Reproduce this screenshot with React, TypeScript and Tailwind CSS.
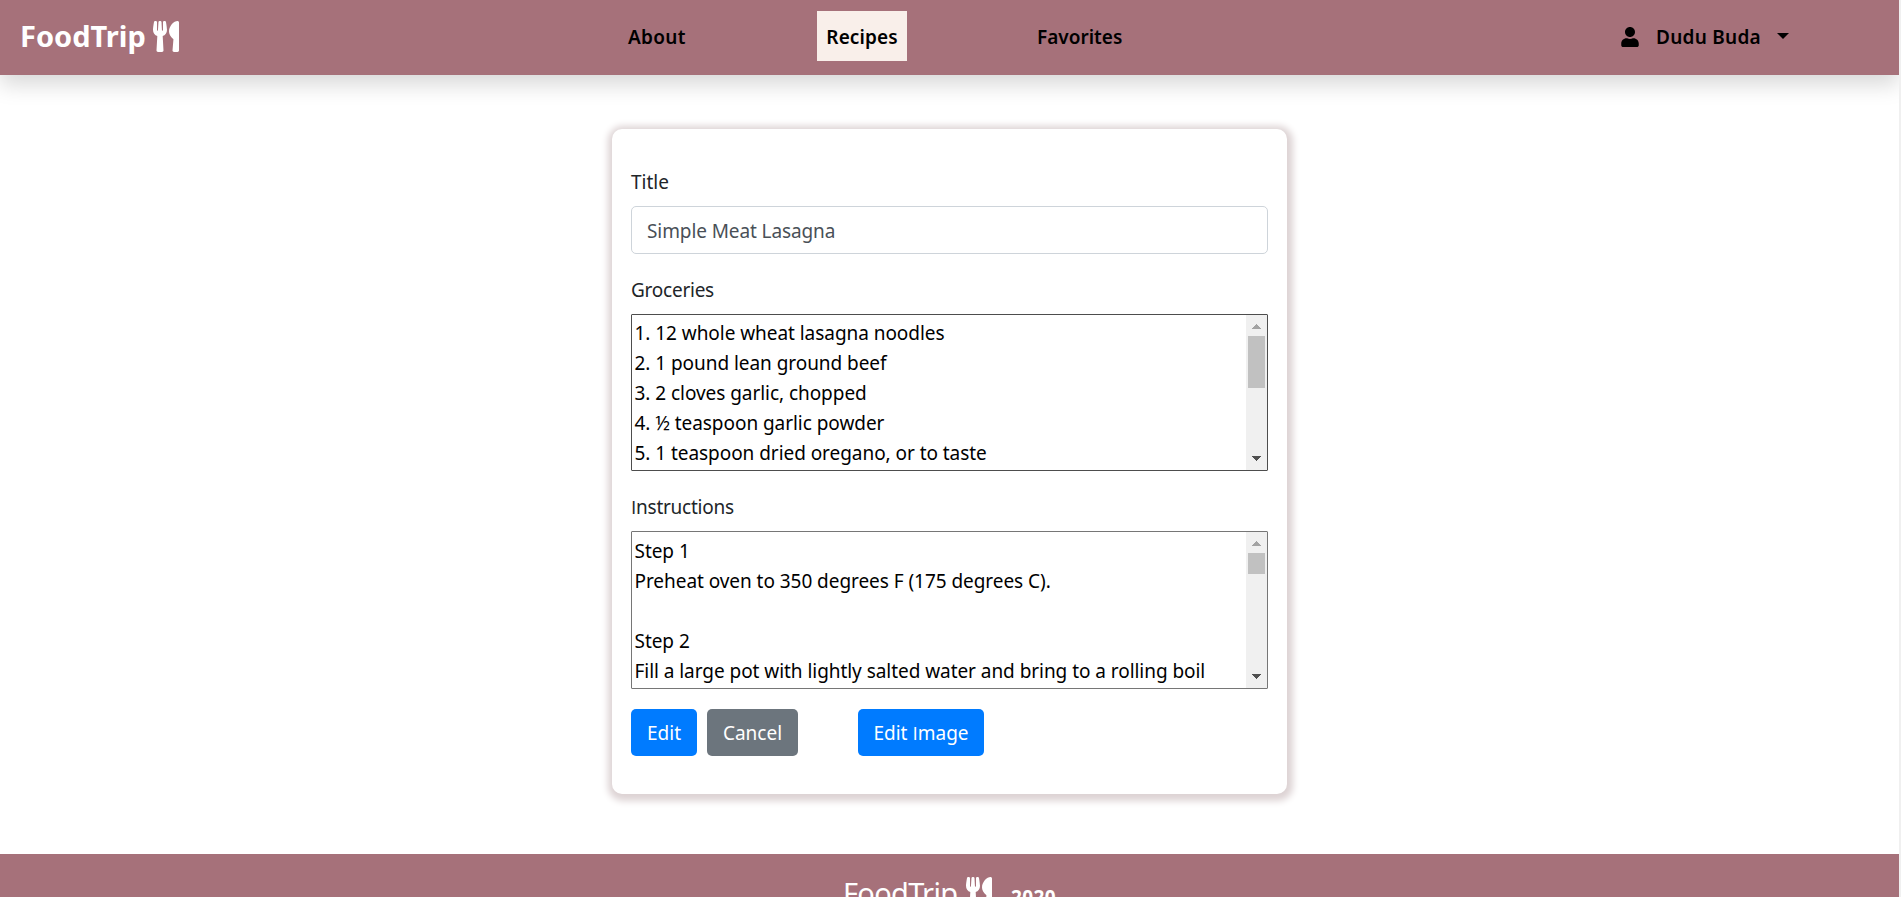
import type { ReactNode } from "react";
import { FaUser, FaUtensils } from "react-icons/fa";

const groceries = [
  "1. 12 whole wheat lasagna noodles",
  "2. 1 pound lean ground beef",
  "3. 2 cloves garlic, chopped",
  "4. ½ teaspoon garlic powder",
  "5. 1 teaspoon dried oregano, or to taste",
];

const instructions = [
  "Step 1",
  "Preheat oven to 350 degrees F (175 degrees C).",
  "",
  "Step 2",
  "Fill a large pot with lightly salted water and bring to a rolling boil",
];

function PlainI() {
  return <span className="font-['Open_Sans',sans-serif]">I</span>;
}

function Scrollbar({ thumb }: { thumb: string }) {
  return (
    <div className="flex w-[21px] shrink-0 flex-col items-center bg-[#f0f0f0]">
      <svg className="h-[21px] w-[21px] shrink-0" viewBox="0 0 21 21" shapeRendering="crispEdges">
        <path d="M6 14h9l-4.5-5z" fill="#a3a3a3" />
      </svg>
      <div className={"w-[17px] bg-[#c1c1c1] " + thumb} />
      <svg className="mt-auto h-[21px] w-[21px] shrink-0" viewBox="0 0 21 21" shapeRendering="crispEdges">
        <path d="M6 7h9l-4.5 5z" fill="#505050" />
      </svg>
    </div>
  );
}

interface TextBoxProps {
  lines: string[];
  frame: string;
  inset: string;
  thumb: string;
}

function TextBox({ lines, frame, inset, thumb }: TextBoxProps) {
  return (
    <div className={"mt-[9px] flex overflow-hidden rounded-[1px] border " + frame}>
      <div className={"min-w-0 flex-1 pl-[2.5px] tracking-[-0.05px] text-black " + inset}>
        {lines.map((line, i) => (
          <div key={i} className="h-[30px] whitespace-nowrap">
            {line}
          </div>
        ))}
      </div>
      <Scrollbar thumb={thumb} />
    </div>
  );
}

function Button({ className, children }: { className: string; children: ReactNode }) {
  return (
    <button className={"flex h-[47px] items-center justify-center whitespace-nowrap rounded-[5px] text-white " + className}>
      {children}
    </button>
  );
}

export default function App() {
  return (
    <div className="flex h-[897px] w-full overflow-hidden bg-white font-['Noto_Sans',sans-serif] text-[19px] leading-[30px] text-[#212529]">
      <div className="flex min-w-0 flex-1 flex-col overflow-hidden">
        <header className="flex h-[75px] shrink-0 items-center bg-[#a6717a] pb-[3px] font-semibold text-black shadow-[0_10px_20px_rgba(0,0,0,0.15)]">
          <div className="flex w-[628px] items-center pl-5 text-white">
            <span className="w-[133px] text-[29px] font-bold">FoodTrip</span>
            <FaUtensils className="h-[31px] w-[26px]" preserveAspectRatio="none" />
          </div>
          <nav className="flex h-full w-[992px] items-center">
            <a className="w-[189px] pt-px tracking-[0.3px]">About</a>
            <a className="flex h-[50px] w-[90px] items-center justify-center bg-[#f9efea] pt-px tracking-[0.1px]">Recipes</a>
            <a className="ml-[130px] pt-px">Favorites</a>
          </nav>
          <div className="flex items-center pt-px">
            <FaUser className="size-5" />
            <span className="ml-4 tracking-[0.25px]">Dudu Buda</span>
            <svg className="mb-0.5 ml-4 h-1.5 w-3" viewBox="0 0 12 6">
              <path d="M0 0h12L6 6z" />
            </svg>
          </div>
        </header>

        <main className="flex h-[779px] shrink-0 justify-center pt-[54px]">
          <form className="flex h-[665px] w-[675px] flex-col rounded-[10px] bg-white px-[19px] pt-[38px] shadow-[1px_2px_7px_5px_#ddd3d4]">
            <label>Title</label>
            <div className="mt-[9px] mb-[21px] flex h-12 items-center rounded-[5px] border border-[#ced4da] px-[15px] pt-0.5 tracking-[-0.1px] text-[#495057]">
              Simple Meat Lasagna
            </div>
            <label className="tracking-[-0.25px]">Groceries</label>
            <TextBox lines={groceries} frame="h-[157px] border-[#4d4d4d]" inset="pt-[3px]" thumb="h-[52px]" />
            <label className="mt-[21px] tracking-[-0.25px]">
              <PlainI />
              nstructions
            </label>
            <TextBox lines={instructions} frame="h-[158px] border-[#767676]" inset="pt-1" thumb="h-[21px]" />
            <div className="mt-5 flex">
              <Button className="w-[66px] bg-[#007bff]">Edit</Button>
              <Button className="ml-2.5 w-[91px] bg-[#6c757d]">Cancel</Button>
              <Button className="ml-[60px] w-[126px] bg-[#007bff]">
                <span>
                  Edit <PlainI />
                  mage
                </span>
              </Button>
            </div>
          </form>
        </main>

        <footer className="flex h-[90px] shrink-0 items-start justify-center bg-[#a6717a] pt-[23px] text-white">
          <span className="mt-px w-[123px] whitespace-nowrap text-[29px] tracking-[-0.7px]">FoodTrip</span>
          <FaUtensils className="h-[31px] w-[26px]" preserveAspectRatio="none" />
          <span className="mt-[5px] ml-[19px] font-bold tracking-[0.4px]">2020</span>
        </footer>
      </div>
      <div className="w-0.5 shrink-0 bg-[#f0f0f0]" />
    </div>
  );
}
